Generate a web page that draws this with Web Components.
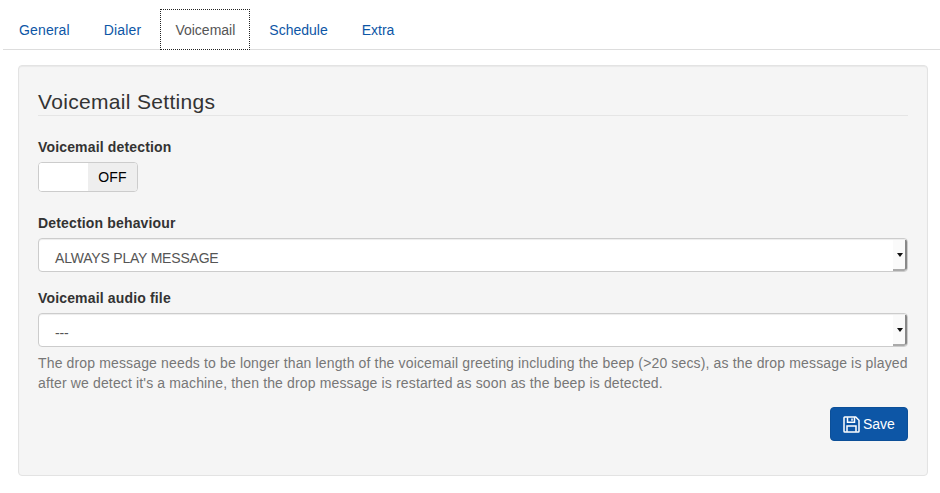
<!DOCTYPE html>
<html><head><meta charset="utf-8"><title>Voicemail</title>
<style>
html,body{margin:0;padding:0;background:#fff;font:14px/20px "Liberation Sans",Arial,sans-serif;color:#333}
body{width:940px;height:493px;overflow:hidden}
</style></head><body>
<settings-page>
  <tab-bar>
    <tab-item style="letter-spacing:.14px">General</tab-item><tab-item style="letter-spacing:.17px">Dialer</tab-item><tab-item active>Voicemail</tab-item><tab-item>Schedule</tab-item><tab-item>Extra</tab-item>
  </tab-bar>
  <well-panel>
    <panel-legend>Voicemail Settings</panel-legend>
    <form-field label="Voicemail detection" gap="6"><toggle-switch></toggle-switch></form-field>
    <form-field label="Detection behaviour"><select-box>ALWAYS PLAY MESSAGE</select-box></form-field>
    <form-field label="Voicemail audio file" style="--mb:0px"><select-box>---</select-box></form-field>
    <help-text>The drop message needs to be longer than length of the voicemail greeting including the beep (&gt;20 secs), as the drop message is played after we detect it's a machine, then the drop message is restarted as soon as the beep is detected.</help-text>
    <form-actions><save-button>Save</save-button></form-actions>
  </well-panel>
</settings-page>
<script>
function def(name, css, html){
  customElements.define(name, class extends HTMLElement{
    constructor(){super();this.attachShadow({mode:'open'}).innerHTML='<style>'+css+'</style>'+(html||'<slot></slot>');}
  });
}
def('settings-page',':host{display:block;padding-top:9px}');
def('tab-bar',':host{display:flex;margin-left:3px;width:937px;height:41px;box-sizing:border-box;border-bottom:1px solid #ddd;padding-left:1px}');
def('tab-item',`:host{display:block;box-sizing:border-box;height:41px;padding:10px 14px;margin-right:4px;color:#0d56a6;border:1px solid transparent;white-space:nowrap}
:host([active]){color:#555;background:#fff;outline:1px dotted #222;outline-offset:-1px}`);
def('well-panel',`:host{display:block;box-sizing:border-box;margin:15px 12px 0 18px;width:910px;height:411px;padding:19px;background:#f5f5f5;border:1px solid #e3e3e3;border-radius:4px;box-shadow:inset 0 1px 1px rgba(0,0,0,.05)}`);
def('panel-legend',`:host{display:block;font-size:21px;line-height:33px;height:30px;color:#333;border-bottom:1px solid #e5e5e5;margin-bottom:21px;letter-spacing:.32px}`);
customElements.define('form-field', class extends HTMLElement{
  constructor(){super();
    const g=this.getAttribute('gap')||'5';
    this.attachShadow({mode:'open'}).innerHTML=`<style>:host{display:block;margin-bottom:var(--mb,16px)}
    label{display:block;font-weight:700;line-height:20px;letter-spacing:.16px;margin-bottom:${g}px}</style><label>${this.getAttribute('label')}</label><slot></slot>`;
  }
});
def('toggle-switch',`:host{display:flex;box-sizing:border-box;width:100px;height:30px;border:1px solid #ccc;border-radius:4px;overflow:hidden;background:#fff;margin-top:-1px;margin-bottom:21px}
.on{width:49px;background:#fff}.off{flex:1;background:#eee;color:#000;text-align:center;line-height:28px;letter-spacing:.2px}`,
`<div class="on"></div><div class="off">OFF</div>`);
def('select-box',`:host{display:flex;box-sizing:border-box;width:870px;height:34px;background:#fff;border:1px solid #ccc;border-radius:4px;color:#555;letter-spacing:-.2px;box-shadow:inset 0 1px 1px rgba(0,0,0,.075);position:relative;overflow:hidden}
.t{flex:1;padding:9px 0 0 16px;line-height:20px}
.b{width:14px;box-sizing:border-box;background:#fafafa;border-right:2px solid #888;border-bottom:2px solid #aaa;border-top:1px solid #eee;border-bottom-right-radius:3px;display:flex;align-items:center;justify-content:flex-end;padding-right:2px}
svg{display:block;margin-top:0}`,
`<div class="t"><slot></slot></div><div class="b"><svg width="6" height="4" viewBox="0 0 6 4"><path d="M0 0h6L3 4z" fill="#111"/></svg></div>`);
def('help-text',`:host{display:block;margin-top:6px;margin-right:-6px;color:#777;line-height:20px;letter-spacing:.145px}`);
def('form-actions',`:host{display:flex;justify-content:flex-end;margin-top:14px}`);
def('save-button',`:host{display:flex;align-items:center;gap:3px;box-sizing:border-box;width:78px;height:34px;padding:0 12px;background:#0d56a6;border:1px solid #0c4f98;border-radius:4px;color:#fff;white-space:nowrap}
svg{flex:none}`,
`<svg width="17" height="17" viewBox="0 0 17 17" fill="none" stroke="#fff" stroke-width="1.5"><path d="M1.7 1h11l3.3 3.3v10.9a.8.8 0 0 1-.8.8H1.800a.8.8 0 0 1-.8-.8V1.700a.7.7 0 0 1 .7-.7z"/><path d="M4.500 1.200v5h7v-5M9 2.500v2.300"/><path d="M4 15.800V10h9v5.800"/></svg><slot></slot>`);
</script>
</body></html>
